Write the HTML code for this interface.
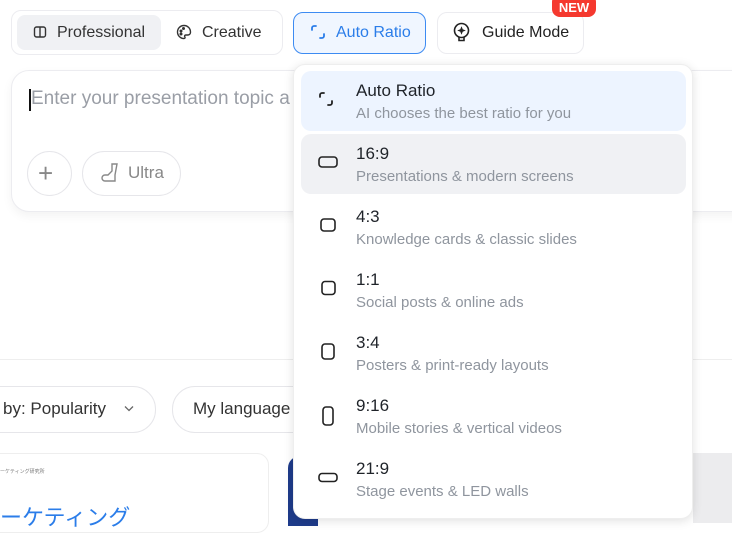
<!DOCTYPE html>
<html><head><meta charset="utf-8"><style>
*{box-sizing:border-box;margin:0;padding:0}
body{width:732px;height:516px;overflow:hidden;background:#fff;font-family:"Liberation Sans","Noto Sans CJK JP",sans-serif;position:relative}
.abs{position:absolute}
.seg{left:11px;top:10px;width:272px;height:45px;border:1px solid #ececf0;border-radius:10px}
.segon{left:17px;top:15px;width:144px;height:35px;background:#f0f1f4;border-radius:8px}
.t{font-size:16px;color:#333}
.btn{border-radius:10px;height:42px}
.card{left:11px;top:70px;width:740px;height:142px;border:1px solid #ececf0;border-radius:18px;box-shadow:0 4px 10px rgba(0,0,0,.05);background:#fff}
.pill{border:1px solid #e6e6ea;border-radius:23px}
.dd{left:293px;top:64px;width:400px;height:455px;background:#fff;border-radius:12px;box-shadow:0 2px 10px rgba(0,0,0,.12);border:1px solid #eee}
.it{position:absolute;left:7px;width:385px;height:60px;border-radius:10px}
.it .a{position:absolute;left:55px;top:10px;font-size:17px;color:#1f2329}
.it .b{position:absolute;left:55px;top:34px;font-size:15px;color:#8f959e}
.it svg{position:absolute;left:17px;top:20px}
</style></head><body>
<div class="abs seg"></div>
<div class="abs segon"></div>
<svg class="abs" style="left:33px;top:25px" width="14" height="14" viewBox="0 0 14 14" fill="none" stroke="#333" stroke-width="1.4"><rect x="1.5" y="2" width="11" height="10" rx="2"/><path d="M7 2v10"/></svg>
<div class="abs t" style="left:57px;top:24px">Professional</div>
<svg class="abs" style="left:176px;top:24px" width="16" height="16" viewBox="0 0 16 16" fill="none" stroke="#333" stroke-width="1.4"><path d="M8 1.5a6.5 6.5 0 1 0 0 13c1.2 0 1.3-1 .8-1.7-.6-.8 0-1.8 1-1.8h2a2.7 2.7 0 0 0 2.7-2.7C14.5 4.3 11.6 1.5 8 1.5z"/><circle cx="5" cy="7" r=".8" fill="#333"/><circle cx="7.5" cy="4.5" r=".8" fill="#333"/><circle cx="5" cy="10" r=".8" fill="#333"/></svg>
<div class="abs t" style="left:202px;top:24px">Creative</div>
<div class="abs btn" style="left:293px;top:12px;width:133px;border:1px solid #3d8bf2;background:#f0f6ff"></div>
<svg class="abs" style="left:310px;top:24px" width="16" height="16" viewBox="0 0 16 16" fill="none" stroke="#2b7de9" stroke-width="1.8" stroke-linecap="round"><path d="M2 6V4a2 2 0 0 1 2-2h2M10 14h2a2 2 0 0 0 2-2v-2"/></svg>
<div class="abs t" style="left:336px;top:24px;color:#2b7de9">Auto Ratio</div>
<div class="abs btn" style="left:437px;top:12px;width:147px;border:1px solid #ececf0"></div>
<svg class="abs" style="left:452px;top:22px" width="19" height="21" viewBox="0 0 19 21" fill="none" stroke="#222" stroke-width="1.6"><circle cx="9.5" cy="8.5" r="7"/><path d="M7 15.5v3h5v-3"/><path d="M9.5 5l1 2.5 2.5 1-2.5 1-1 2.5-1-2.5-2.5-1 2.5-1z" fill="#222" stroke-width=".6"/></svg>
<div class="abs t" style="left:482px;top:24px;color:#222">Guide Mode</div>
<div class="abs" style="left:552px;top:-6px;width:44px;height:23px;background:#f5392f;border-radius:8px;color:#fff;font-weight:bold;font-size:13px;text-align:center;line-height:27px">NEW</div>
<div class="abs card"></div>
<div class="abs" style="left:29px;top:89px;width:2px;height:22px;background:#111"></div>
<div class="abs" style="left:31px;top:88px;font-size:19px;color:#9a9ea6;white-space:nowrap">Enter your presentation topic a</div>
<div class="abs pill" style="left:27px;top:151px;width:45px;height:45px"></div>
<div class="abs" style="left:38px;top:160px;font-size:26px;color:#888;font-weight:300;line-height:26px">+</div>
<div class="abs pill" style="left:82px;top:151px;width:99px;height:45px"></div>
<svg class="abs" style="left:100px;top:162px" width="20" height="22" viewBox="0 0 20 22" fill="none" stroke="#888" stroke-width="1.4"><path d="M12 2h5l-2 11v6H5a3 3 0 0 1 0-6h3l4-4z"/></svg>
<div class="abs" style="left:128px;top:163px;font-size:17px;color:#888">Ultra</div>
<div class="abs" style="left:0;top:359px;width:732px;height:1px;background:#eee"></div>
<div class="abs pill" style="left:-30px;top:386px;width:186px;height:47px"></div>
<div class="abs" style="left:3px;top:399px;font-size:17px;color:#333">by: Popularity</div>
<svg class="abs" style="left:124px;top:405px" width="10" height="7" viewBox="0 0 10 7" fill="none" stroke="#666" stroke-width="1.3"><path d="M1 1.5l4 4 4-4"/></svg>
<div class="abs pill" style="left:172px;top:386px;width:180px;height:47px"></div>
<div class="abs" style="left:193px;top:399px;font-size:17px;color:#333">My language</div>
<div class="abs" style="left:-20px;top:453px;width:289px;height:80px;border:1px solid #eee;border-radius:12px"></div>
<div class="abs" style="left:0;top:468px;font-size:5px;color:#777">ーケティング研究所</div>
<div class="abs" style="left:0;top:500px;font-size:22px;color:#2b7de9">ーケティング</div>
<div class="abs" style="left:288px;top:456px;width:30px;height:70px;background:#1e3b8a;border-radius:12px 0 0 0"></div>
<div class="abs" style="left:693px;top:453px;width:40px;height:70px;background:#ececee"></div>
<div class="abs dd">
 <div class="it" style="top:6px;background:#edf4ff"><svg width="16" height="16" viewBox="0 0 16 16" fill="none" stroke="#222" stroke-width="1.8" stroke-linecap="round"><path d="M2 6V4a2 2 0 0 1 2-2h2M10 14h2a2 2 0 0 0 2-2v-2"/></svg><div class="a">Auto Ratio</div><div class="b">AI chooses the best ratio for you</div></div>
 <div class="it" style="top:69px;background:#f0f1f4"><svg width="20" height="16" viewBox="0 0 20 16" fill="none" stroke="#222" stroke-width="1.6"><rect x="1" y="3" width="18" height="10" rx="3"/></svg><div class="a">16:9</div><div class="b">Presentations &amp; modern screens</div></div>
 <div class="it" style="top:132px"><svg width="20" height="16" viewBox="0 0 20 16" fill="none" stroke="#222" stroke-width="1.6"><rect x="3" y="2" width="14" height="12" rx="3"/></svg><div class="a">4:3</div><div class="b">Knowledge cards &amp; classic slides</div></div>
 <div class="it" style="top:195px"><svg width="20" height="16" viewBox="0 0 20 16" fill="none" stroke="#222" stroke-width="1.6"><rect x="4" y="1.5" width="13" height="13" rx="3"/></svg><div class="a">1:1</div><div class="b">Social posts &amp; online ads</div></div>
 <div class="it" style="top:258px"><svg width="20" height="18" viewBox="0 0 20 18" fill="none" stroke="#222" stroke-width="1.6"><rect x="4" y="1" width="12" height="15" rx="3"/></svg><div class="a">3:4</div><div class="b">Posters &amp; print-ready layouts</div></div>
 <div class="it" style="top:321px"><svg width="20" height="22" viewBox="0 0 20 22" fill="none" stroke="#222" stroke-width="1.6"><rect x="5" y="1" width="10" height="18" rx="3"/></svg><div class="a">9:16</div><div class="b">Mobile stories &amp; vertical videos</div></div>
 <div class="it" style="top:384px"><svg width="20" height="16" viewBox="0 0 20 16" fill="none" stroke="#222" stroke-width="1.6"><rect x="1" y="4.5" width="18" height="8" rx="3"/></svg><div class="a">21:9</div><div class="b">Stage events &amp; LED walls</div></div>
</div>
</body></html>
